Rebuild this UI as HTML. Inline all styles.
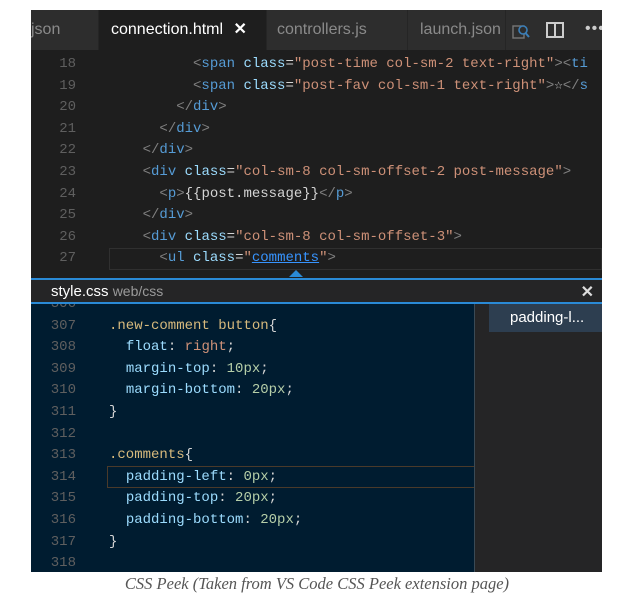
<!DOCTYPE html>
<html><head><meta charset="utf-8"><style>
*{margin:0;padding:0;box-sizing:border-box}
body{width:634px;height:605px;background:#fff;position:relative;overflow:hidden;font-family:"Liberation Sans",sans-serif}
#shot{position:absolute;left:31px;top:10px;width:571px;height:562px;background:#1e1e1e;overflow:hidden}
.tabs{position:absolute;left:0;top:0;width:571px;height:40px;background:#2d2d2d}
.tab{position:absolute;top:0;height:40px;line-height:40px;font-size:16px;color:#8a8a8a;white-space:nowrap;overflow:hidden;border-right:1px solid #252525}
.tab.act{background:#1e1e1e;color:#fff}
.mono{font-family:"Liberation Mono",monospace;font-size:14px}
.ln{position:absolute;left:0;width:45px;text-align:right;color:#5f5f5f}
.cd{position:absolute;left:78px;white-space:pre;color:#d4d4d4}
.g{color:#808080}.t{color:#569cd6}.a{color:#9cdcfe}.s{color:#ce9178}.y{color:#d7ba7d}.n{color:#b5cea8}
.peek{position:absolute;left:0;top:268px;width:571px;height:294px;background:#252526}
.code2{position:absolute;left:0;top:26px;width:444px;height:268px;background:#001c30;border-right:1px solid #3a4a55;overflow:hidden}
.side{position:absolute;left:458px;top:26px;width:113px;height:268px;background:#252526}
</style></head><body>
<div id="shot">
 <div class="tabs">
  <div class="tab" style="left:0;width:68px;padding-left:0">json</div>
  <div class="tab act" style="left:68px;width:168px;padding-left:12px">connection.html <span style="font-weight:bold;margin-left:6px">✕</span></div>
  <div class="tab" style="left:236px;width:141px;padding-left:10px">controllers.js</div>
  <div class="tab" style="left:377px;width:98px;padding-left:12px">launch.json</div>
  <svg style="position:absolute;left:480px;top:11px" width="20" height="20" viewBox="0 0 20 20"><rect x="2" y="5" width="11" height="12" fill="none" stroke="#777" stroke-width="1.4"/><circle cx="12" cy="9" r="4" fill="#2d2d2d" stroke="#3b7fb8" stroke-width="1.6"/><path d="M14.5 12 L18 16" stroke="#3b7fb8" stroke-width="2"/></svg>
  <svg style="position:absolute;left:515px;top:12px" width="18" height="16"><rect x="1" y="1" width="16" height="14" fill="none" stroke="#ccc" stroke-width="2"/><rect x="8" y="1" width="2" height="14" fill="#ccc"/></svg>
  <div style="position:absolute;left:554px;top:10px;color:#ccc;font-size:16px;letter-spacing:1px">•••</div>
 </div>
 <div class="mono" style="position:absolute;left:0;top:44px;width:571px">
  <div style="position:relative;height:216px;line-height:21.6px">
   <div class="ln" style="top:0">18</div><div class="cd" style="top:0">          <span class="g">&lt;</span><span class="t">span</span> <span class="a">class</span>=<span class="s">"post-time col-sm-2 text-right"</span><span class="g">&gt;&lt;</span><span class="t">ti</span></div>
   <div class="ln" style="top:21.6px">19</div><div class="cd" style="top:21.6px">          <span class="g">&lt;</span><span class="t">span</span> <span class="a">class</span>=<span class="s">"post-fav col-sm-1 text-right"</span><span class="g">&gt;</span>☆<span class="g">&lt;/</span><span class="t">s</span></div>
   <div class="ln" style="top:43.2px">20</div><div class="cd" style="top:43.2px">        <span class="g">&lt;/</span><span class="t">div</span><span class="g">&gt;</span></div>
   <div class="ln" style="top:64.8px">21</div><div class="cd" style="top:64.8px">      <span class="g">&lt;/</span><span class="t">div</span><span class="g">&gt;</span></div>
   <div class="ln" style="top:86.4px">22</div><div class="cd" style="top:86.4px">    <span class="g">&lt;/</span><span class="t">div</span><span class="g">&gt;</span></div>
   <div class="ln" style="top:108px">23</div><div class="cd" style="top:108px">    <span class="g">&lt;</span><span class="t">div</span> <span class="a">class</span>=<span class="s">"col-sm-8 col-sm-offset-2 post-message"</span><span class="g">&gt;</span></div>
   <div class="ln" style="top:129.6px">24</div><div class="cd" style="top:129.6px">      <span class="g">&lt;</span><span class="t">p</span><span class="g">&gt;</span>{{post.message}}<span class="g">&lt;/</span><span class="t">p</span><span class="g">&gt;</span></div>
   <div class="ln" style="top:151.2px">25</div><div class="cd" style="top:151.2px">    <span class="g">&lt;/</span><span class="t">div</span><span class="g">&gt;</span></div>
   <div class="ln" style="top:172.8px">26</div><div class="cd" style="top:172.8px">    <span class="g">&lt;</span><span class="t">div</span> <span class="a">class</span>=<span class="s">"col-sm-8 col-sm-offset-3"</span><span class="g">&gt;</span></div>
   <div style="position:absolute;left:78px;top:194px;width:493px;height:22px;border:1px solid #303030"></div>
   <div class="ln" style="top:194.4px">27</div><div class="cd" style="top:194.4px">      <span class="g">&lt;</span><span class="t">ul</span> <span class="a">class</span>=<span class="s">"</span><span style="color:#3794ff;text-decoration:underline">comments</span><span class="s">"</span><span class="g">&gt;</span></div>
  </div>
 </div>
 <div style="position:absolute;left:258px;top:260px;width:0;height:0;border-left:7px solid transparent;border-right:7px solid transparent;border-bottom:7px solid #2a8ad6"></div>
 <div class="peek">
  <div style="position:absolute;left:0;top:0;width:571px;height:2px;background:#2a8ad6"></div>
  <div style="position:absolute;left:20px;top:5px;font-size:15px;color:#fff">style.css <span style="color:#9a9a9a;font-size:14px">web/css</span></div>
  <div style="position:absolute;right:8px;top:4px;font-size:16px;color:#ddd;font-weight:bold">✕</div>
  <div style="position:absolute;left:0;top:24px;width:571px;height:2px;background:#2a8ad6"></div>
  <div class="code2 mono">
   <div style="position:relative;line-height:21.6px;top:-10px">
    <div class="ln" style="top:0">306</div>
    <div class="ln" style="top:21.6px">307</div><div class="cd" style="top:21.6px"><span class="y">.new-comment button</span>{</div>
    <div class="ln" style="top:43.2px">308</div><div class="cd" style="top:43.2px">  <span class="a">float</span>: <span class="s">right</span>;</div>
    <div class="ln" style="top:64.8px">309</div><div class="cd" style="top:64.8px">  <span class="a">margin-top</span>: <span class="n">10px</span>;</div>
    <div class="ln" style="top:86.4px">310</div><div class="cd" style="top:86.4px">  <span class="a">margin-bottom</span>: <span class="n">20px</span>;</div>
    <div class="ln" style="top:108px">311</div><div class="cd" style="top:108px">}</div>
    <div class="ln" style="top:129.6px">312</div>
    <div class="ln" style="top:151.2px">313</div><div class="cd" style="top:151.2px"><span class="y">.comments</span>{</div>
    <div style="position:absolute;left:76px;top:172px;width:378px;height:22px;border:1px solid #4a3a2a"></div>
    <div class="ln" style="top:172.8px">314</div><div class="cd" style="top:172.8px">  <span class="a">padding-left</span>: <span class="n">0px</span>;</div>
    <div class="ln" style="top:194.4px">315</div><div class="cd" style="top:194.4px">  <span class="a">padding-top</span>: <span class="n">20px</span>;</div>
    <div class="ln" style="top:216px">316</div><div class="cd" style="top:216px">  <span class="a">padding-bottom</span>: <span class="n">20px</span>;</div>
    <div class="ln" style="top:237.6px">317</div><div class="cd" style="top:237.6px">}</div>
    <div class="ln" style="top:259.2px">318</div>
   </div>
  </div>
  <div class="side"><div style="height:28px;background:#2d3e50;color:#fff;font-size:15px;line-height:28px;padding-left:21px">padding-l...</div></div>
 </div>
</div>
<div style="position:absolute;left:0;top:574px;width:634px;text-align:center;font-family:'Liberation Serif',serif;font-style:italic;font-size:16.5px;color:#555">CSS Peek (Taken from VS Code CSS Peek extension page)</div>
</body></html>
